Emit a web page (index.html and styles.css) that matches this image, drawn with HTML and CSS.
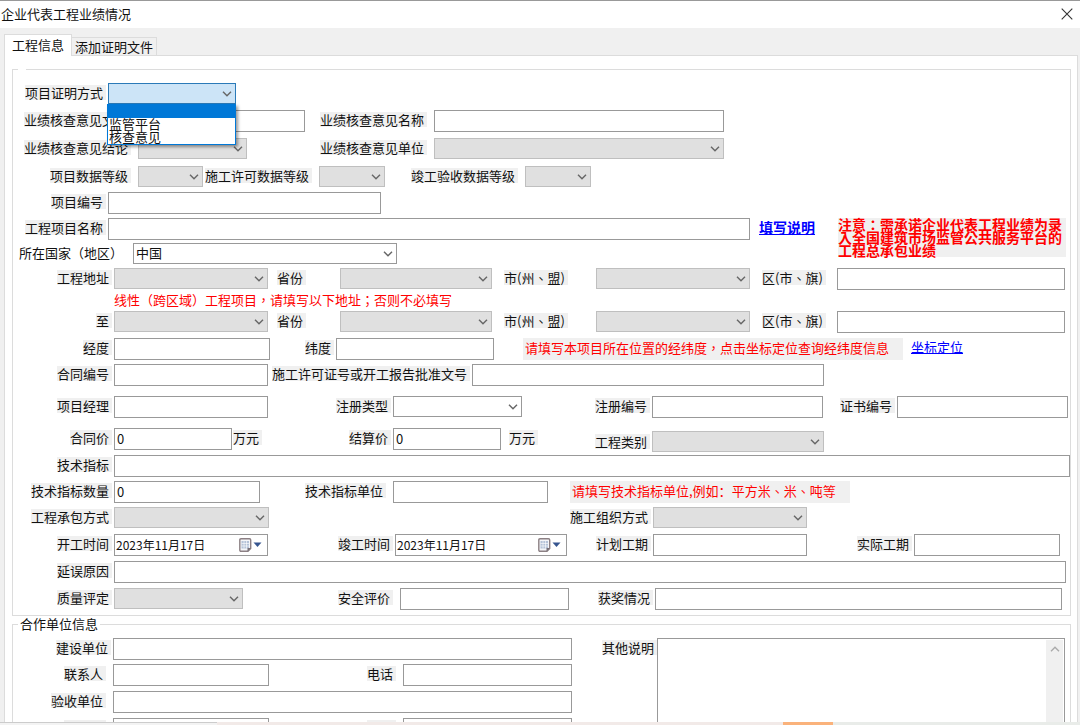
FILE: index.html
```html
<!DOCTYPE html>
<html lang="zh-CN">
<head>
<meta charset="utf-8">
<meta name="viewport" content="width=device-width, initial-scale=1">
<title>企业代表工程业绩情况</title>
<link rel="stylesheet" href="styles.css">
</head>
<body>
<svg class="symbols" aria-hidden="true">
  <symbol id="chevron" viewBox="0 0 10 6"><path d="M1 .8 5 4.8 9 .8" fill="none" stroke="currentColor" stroke-width="1.4"/></symbol>
  <symbol id="calendar" viewBox="0 0 23 14">
    <path d="M2 .8h8.5q1.2 0 1.2 1.2v8.5L9 13.2H2Q.8 13.2.8 12V2Q.8.8 2 .8z" fill="#f4f5f8" stroke="#8c8084" stroke-width="1.4"/>
    <path d="M2.500 3h7.500v7.500H2.500z" fill="#b4c2d8"/>
    <path d="M2.500 5.500h7.500M2.500 8h7.500M5 3v7.500M7.500 3v7.500" stroke="#fff" stroke-width=".6"/>
    <path d="M12 10H8.500v3.500z" fill="#777078"/>
    <path d="M14.500 4.500h8L18.500 9z" fill="#36558f"/>
  </symbol>
</svg>

<header class="titlebar">
  <h1>企业代表工程业绩情况</h1>
  <button class="close" type="button" aria-label="关闭"><svg viewBox="0 0 12 12"><path d="M.7.7l10.600 10.600M11.300.7L.7 11.300" stroke="#333" stroke-width="1.100"/></svg></button>
</header>

<main class="window">
  <div class="tabs" role="tablist">
    <button class="tab tab-active" type="button" role="tab" aria-selected="true">工程信息</button>
    <button class="tab" type="button" role="tab" aria-selected="false">添加证明文件</button>
  </div>

  <form class="panel">
    <fieldset class="group group-main">
      <legend aria-label="工程信息"></legend>

      <div class="row row-proof">
        <label for="proof">项目证明方式</label>
        <div class="combo combo-open">
          <select id="proof"><option></option></select>
          <svg class="arrow"><use href="#chevron"/></svg>
          <ul class="menu" role="listbox" aria-label="项目证明方式">
            <li class="selected" role="option" aria-selected="true"></li>
            <li role="option" aria-selected="false">监管平台</li>
            <li role="option" aria-selected="false">核查意见</li>
          </ul>
        </div>
      </div>

      <div class="row row-opinion">
        <label class="far" for="op-no">业绩核查意见文号</label>
        <input id="op-no" type="text">
        <label class="far" for="op-name">业绩核查意见名称</label>
        <input id="op-name" type="text">
      </div>

      <div class="row row-result loose">
        <label class="far" for="op-result">业绩核查意见结论</label>
        <div class="combo"><select id="op-result" disabled></select><svg class="arrow"><use href="#chevron"/></svg></div>
        <label class="far" for="op-unit">业绩核查意见单位</label>
        <div class="combo"><select id="op-unit" disabled></select><svg class="arrow"><use href="#chevron"/></svg></div>
      </div>

      <div class="row row-levels loose">
        <label class="far" for="lv-project">项目数据等级</label>
        <div class="combo"><select id="lv-project" disabled></select><svg class="arrow"><use href="#chevron"/></svg></div>
        <label class="far" for="lv-permit">施工许可数据等级</label>
        <div class="combo"><select id="lv-permit" disabled></select><svg class="arrow"><use href="#chevron"/></svg></div>
        <label class="far" for="lv-accept">竣工验收数据等级</label>
        <div class="combo"><select id="lv-accept" disabled></select><svg class="arrow"><use href="#chevron"/></svg></div>
      </div>

      <div class="row row-number tight">
        <label for="pj-no">项目编号</label>
        <input id="pj-no" type="text">
      </div>

      <div class="row row-name tight">
        <label for="pj-name">工程项目名称</label>
        <input id="pj-name" type="text">
        <a class="help" href="#help">填写说明</a>
        <p class="notice" lang="zh-Hant">注意：需承诺企业代表工程业绩为录入全国建筑市场监管公共服务平台的工程总承包业绩</p>
      </div>

      <div class="row row-country close-up">
        <label class="far plain" for="country" lang="zh-Hant">所在国家（地区）</label>
        <div class="combo"><select id="country"><option>中国</option></select><svg class="arrow"><use href="#chevron"/></svg></div>
      </div>

      <div class="row row-address close-up">
        <label for="addr1">工程地址</label>
        <div class="combo"><select id="addr1" disabled></select><svg class="arrow"><use href="#chevron"/></svg></div>
        <label class="after" for="prov1">省份</label>
        <div class="combo"><select id="prov1" disabled></select><svg class="arrow"><use href="#chevron"/></svg></div>
        <label class="after-wide" for="city1" lang="zh-Hant">市(州、盟)</label>
        <div class="combo"><select id="city1" disabled></select><svg class="arrow"><use href="#chevron"/></svg></div>
        <label class="after-wide" for="dist1" lang="zh-Hant">区(市、旗)</label>
        <input id="dist1" type="text">
      </div>

      <p class="hint" lang="zh-Hant">线性（跨区域）工程项目，请填写以下地址；否则不必填写</p>

      <div class="row row-address flush">
        <label for="addr2">至</label>
        <div class="combo"><select id="addr2" disabled></select><svg class="arrow"><use href="#chevron"/></svg></div>
        <label class="after" for="prov2">省份</label>
        <div class="combo"><select id="prov2" disabled></select><svg class="arrow"><use href="#chevron"/></svg></div>
        <label class="after-wide" for="city2" lang="zh-Hant">市(州、盟)</label>
        <div class="combo"><select id="city2" disabled></select><svg class="arrow"><use href="#chevron"/></svg></div>
        <label class="after-wide" for="dist2" lang="zh-Hant">区(市、旗)</label>
        <input id="dist2" type="text">
      </div>

      <div class="row row-position">
        <label for="lng">经度</label>
        <input id="lng" type="text">
        <label for="lat">纬度</label>
        <input id="lat" type="text">
        <p class="tip tip-position" lang="zh-Hant">请填写本项目所在位置的经纬度，点击坐标定位查询经纬度信息</p>
        <a href="#locate">坐标定位</a>
      </div>

      <div class="row row-contract tight">
        <label for="ct-no">合同编号</label>
        <input id="ct-no" type="text">
        <label for="permit-no">施工许可证号或开工报告批准文号</label>
        <input id="permit-no" type="text">
      </div>

      <div class="row row-manager section">
        <label for="manager">项目经理</label>
        <input id="manager" type="text">
        <label for="reg-type">注册类型</label>
        <div class="combo"><select id="reg-type"><option></option></select><svg class="arrow"><use href="#chevron"/></svg></div>
        <label for="reg-no">注册编号</label>
        <input id="reg-no" type="text">
        <label for="cert-no">证书编号</label>
        <input id="cert-no" type="text">
      </div>

      <div class="row row-price section">
        <label for="price">合同价</label>
        <input id="price" type="text" value="0">
        <span class="unit">万元</span>
        <label for="settle">结算价</label>
        <input id="settle" type="text" value="0">
        <span class="unit unit-apart">万元</span>
        <label class="low" for="category">工程类别</label>
        <div class="combo low"><select id="category" disabled></select><svg class="arrow"><use href="#chevron"/></svg></div>
      </div>

      <div class="row row-index">
        <label for="tech">技术指标</label>
        <input id="tech" type="text">
      </div>

      <div class="row row-amount tight">
        <label for="tech-num">技术指标数量</label>
        <input id="tech-num" type="text" value="0">
        <label class="far" for="tech-unit">技术指标单位</label>
        <input id="tech-unit" type="text">
        <p class="tip tip-unit"><span>请填写技术指标单位,例如：</span><span lang="zh-Hant">平方米、米、吨等</span></p>
      </div>

      <div class="row row-mode tight">
        <label for="mode">工程承包方式</label>
        <div class="combo"><select id="mode" disabled></select><svg class="arrow"><use href="#chevron"/></svg></div>
        <label for="org">施工组织方式</label>
        <div class="combo"><select id="org" disabled></select><svg class="arrow"><use href="#chevron"/></svg></div>
      </div>

      <div class="row row-dates">
        <label for="start">开工时间</label>
        <div class="date"><input id="start" type="text" value="2023年11月17日"><button type="button" aria-label="选择开工时间"><svg><use href="#calendar"/></svg></button></div>
        <label for="finish">竣工时间</label>
        <div class="date"><input id="finish" type="text" value="2023年11月17日"><button type="button" aria-label="选择竣工时间"><svg><use href="#calendar"/></svg></button></div>
        <label for="planned">计划工期</label>
        <input id="planned" type="text">
        <label for="actual">实际工期</label>
        <input id="actual" type="text">
      </div>

      <div class="row row-delay">
        <label for="delay">延误原因</label>
        <input id="delay" type="text">
      </div>

      <div class="row row-quality">
        <label for="quality">质量评定</label>
        <div class="combo"><select id="quality" disabled></select><svg class="arrow"><use href="#chevron"/></svg></div>
        <label class="far" for="safety">安全评价</label>
        <input id="safety" type="text">
        <label for="award">获奖情况</label>
        <input id="award" type="text">
      </div>
    </fieldset>

    <fieldset class="group group-partners">
      <legend>合作单位信息</legend>
      <div class="partners">
        <div class="partner-rows">
          <div class="row row-single">
            <label for="builder">建设单位</label>
            <input id="builder" type="text">
          </div>
          <div class="row row-pair tight">
            <label class="far" for="contact1">联系人</label>
            <input id="contact1" type="text">
            <label class="far" for="phone1">电话</label>
            <input id="phone1" type="text">
          </div>
          <div class="row row-single">
            <label class="far" for="acceptor">验收单位</label>
            <input id="acceptor" type="text">
          </div>
          <div class="row row-pair">
            <label class="far" for="contact2">联系人</label>
            <input id="contact2" type="text">
            <label class="far" for="phone2">电话</label>
            <input id="phone2" type="text">
          </div>
        </div>
        <label class="remark-label" for="remark">其他说明</label>
        <div class="remark">
          <textarea id="remark"></textarea>
          <div class="scrollbar"><svg><use href="#chevron"/></svg></div>
        </div>
      </div>
    </fieldset>
  </form>
</main>
<footer class="edge"><span class="edge-left"></span><span class="edge-mid"></span><span class="edge-mark"></span><span class="edge-right"></span></footer>
</body>
</html>
```

FILE: styles.css
```css
* { box-sizing: border-box; }

body {
  margin: 0;
  height: 100vh;
  display: flex;
  flex-direction: column;
  overflow: hidden;
  background: #f0f0f0;
  color: #111;
  font: 13px/16px "Noto Sans CJK SC", "Liberation Sans", sans-serif;
}

input, select, textarea, button { font: inherit; color: inherit; }
p, h1, ul { margin: 0; padding: 0; }
.symbols { position: absolute; width: 0; height: 0; }

/* Title bar */
.titlebar {
  flex: none;
  display: flex;
  align-items: center;
  justify-content: space-between;
  height: 28px;
  padding: 0 7px 2px 1px;
  border-top: 1px solid #999;
  background: #fff;
}
.titlebar h1 { font-size: 13px; font-weight: 400; }
.close { display: flex; padding: 0; border: 0; background: none; }
.close svg { width: 12px; height: 12px; }

/* Tabs and panel */
.window {
  flex: 1;
  min-height: 0;
  overflow: hidden;
  padding: 6px 2px 0 4px;
}
.tabs { display: flex; align-items: flex-end; height: 21px; }
.tab {
  height: 18px;
  padding: 0 3px;
  border: 1px solid #dcdcdc;
  border-left: 0;
  border-bottom: 0;
  background: #f0f0f0;
  line-height: 16px;
}
.tab-active {
  position: relative;
  height: 22px;
  margin-bottom: -1px;
  padding: 0 7px 2px;
  border-left: 1px solid #dcdcdc;
  background: #fff;
  line-height: 18px;
}
.panel {
  padding: 13px 6px 0 7px;
  border: 1px solid #dcdcdc;
  background: #fff;
}
.group {
  min-width: 0;
  margin: 0;
  padding: 0;
  border: 1px solid #dcdcdc;
}
.group-main { padding: 13px 0 5px; }
.group-partners { padding-top: 6px; }
legend { margin-left: 5px; padding: 0 2px; }
.group-main legend { padding: 0 4px; }

/* Form rows */
.row {
  display: grid;
  grid-template-rows: 22px;
  align-items: start;
  height: 22px;
  margin-top: 5px;
}
legend + .row, .partner-rows .row:first-child { margin-top: 0; }
.row.loose { margin-top: 6px; }
.row.tight { margin-top: 4px; }
.row.close-up { margin-top: 3px; }
.row.flush { margin-top: 0; }
.row.section { margin-top: 10px; }

.row-proof { grid-template-columns: 95px 128fr 834fr; }
.row-opinion { grid-template-columns: 125px 167fr 129px 290fr 346fr; }
.row-result { grid-template-columns: 125px 109fr 187px 290fr 346fr; }
.row-levels { grid-template-columns: 125px 65fr 116px 66fr 140px 66fr 479fr; }
.row-number { grid-template-columns: 95px 273fr 689fr; }
.row-name { grid-template-columns: 95px 1fr 88px 228px 4px; }
.row-country { grid-template-columns: 120px 264fr 673fr; }
.row-address { grid-template-columns: 101px 154fr 72px 152fr 104px 154fr 87px 228fr 5px; }
.row-position { grid-template-columns: 101px 156fr 66px 158fr 417px 52px 107fr; }
.row-contract { grid-template-columns: 101px 154fr 204px 352fr 246fr; }
.row-manager { grid-template-columns: 101px 154fr 125px 129fr 130px 171fr 74px 171fr 2px; }
.row-price { grid-template-columns: 101px 118fr 32px 129px 108fr 40px 111px 172fr 246fr; }
.row-index { grid-template-columns: 101px 1fr; }
.row-amount { grid-template-columns: 101px 146fr 133px 155fr 302px 220fr; }
.row-mode { grid-template-columns: 101px 155fr 384px 154fr 263fr; }
.row-dates { grid-template-columns: 101px 154fr 127px 172fr 86px 154fr 107px 146fr 10px; }
.row-delay { grid-template-columns: 101px 1fr 4px; }
.row-quality { grid-template-columns: 101px 129fr 157px 169fr 86px 407fr 8px; }
.row-single { grid-template-columns: 100px 1fr; }
.row-pair { grid-template-columns: 100px 156fr 134px 169fr; }

/* Labels */
label, .unit {
  justify-self: end;
  align-self: start;
  margin: 2px 2px 0 0;
  padding-right: 3px;
  background: #f0f0f0;
  line-height: 15px;
  white-space: nowrap;
}
.far { margin-right: 7px; }
.plain { background: none; }
[lang="zh-Hant"] { font-family: "Noto Sans CJK TC", sans-serif; }
.after, .after-wide, .unit { justify-self: start; margin-right: 0; }
.after { margin-left: 9px; }
.after-wide { margin-left: 12px; }
.unit { margin-left: 1px; }
.unit-apart { margin-left: 8px; }
.combo.low { margin-top: 3px; }
label.low { margin-top: 6px; }

/* Fields */
input {
  width: 100%;
  min-width: 0;
  height: 22px;
  padding: 0 2px 2px;
  border: 1px solid #999;
  border-radius: 0;
  background: #fff;
}
.combo, .date { position: relative; min-width: 0; }
select {
  display: block;
  width: 100%;
  height: 21px;
  padding: 0 2px 2px;
  border: 1px solid #999;
  border-radius: 0;
  background: #fff;
  appearance: none;
}
select:disabled { border-color: #bfbfbf; background: #e0e0e0; opacity: 1; }
.arrow {
  position: absolute;
  right: 4px;
  top: 8px;
  width: 10px;
  height: 6px;
  color: #666;
  pointer-events: none;
}
.combo-open select { border-color: #2a7ab8; background: #cce4f7; }
.menu {
  position: absolute;
  z-index: 2;
  top: 21px;
  left: -1px;
  right: 0;
  border: 1px solid #0078d7;
  background: #fff;
  box-shadow: 2px 2px 3px rgba(0, 0, 0, .4);
  list-style: none;
}
.menu li { height: 13px; padding-left: 1px; line-height: 12px; }
.menu .selected { background: #0078d7; }
.date input { padding: 0 30px 1px 1px; font-size: 12px; }
.date button {
  position: absolute;
  right: 6px;
  top: 4px;
  display: flex;
  padding: 0;
  border: 0;
  background: none;
}
.date svg { width: 23px; height: 14px; }

/* Notes and links */
a { margin-top: 1px; color: #00f; white-space: nowrap; }
.help { margin-left: 9px; font-size: 14px; font-weight: 700; }
.notice {
  background: #f0f0f0;
  color: #f00;
  font-size: 14px;
  font-weight: 700;
  line-height: 13px;
}
.hint { height: 21px; margin-left: 101px; color: #f00; line-height: 19px; }
.tip {
  height: 22px;
  padding: 0 2px;
  background: #f0f0f0;
  color: #f00;
  line-height: 20px;
  white-space: nowrap;
}
.tip-position { margin: 0 8px 0 29px; }
.tip-unit { margin-left: 22px; }

/* Partner organisations */
.partners { display: grid; grid-template-columns: 559fr 85px 408fr 5px; }
.remark-label { margin-right: 0; }
.remark { position: relative; }
textarea {
  display: block;
  width: 100%;
  height: 140px;
  padding: 2px 20px 2px 2px;
  border: 1px solid #999;
  border-radius: 0;
  resize: none;
}
.scrollbar {
  position: absolute;
  top: 2px;
  right: 2px;
  bottom: 2px;
  width: 17px;
  padding: 5px 4px;
  background: #f0f0f0;
  color: #aaa;
}
.scrollbar svg { display: block; width: 10px; height: 8px; transform: rotate(180deg); }

/* Strip along the bottom edge */
.edge { flex: none; display: flex; height: 3px; }
.edge-left { flex: 217; border-top: 1px solid #ccc; background: #f3f3f3; }
.edge-mid { flex: 566; background: #f2eae8; }
.edge-mark { flex: 50; background: #fab27b; }
.edge-right { flex: 247; background: #e9ece9; }
```
